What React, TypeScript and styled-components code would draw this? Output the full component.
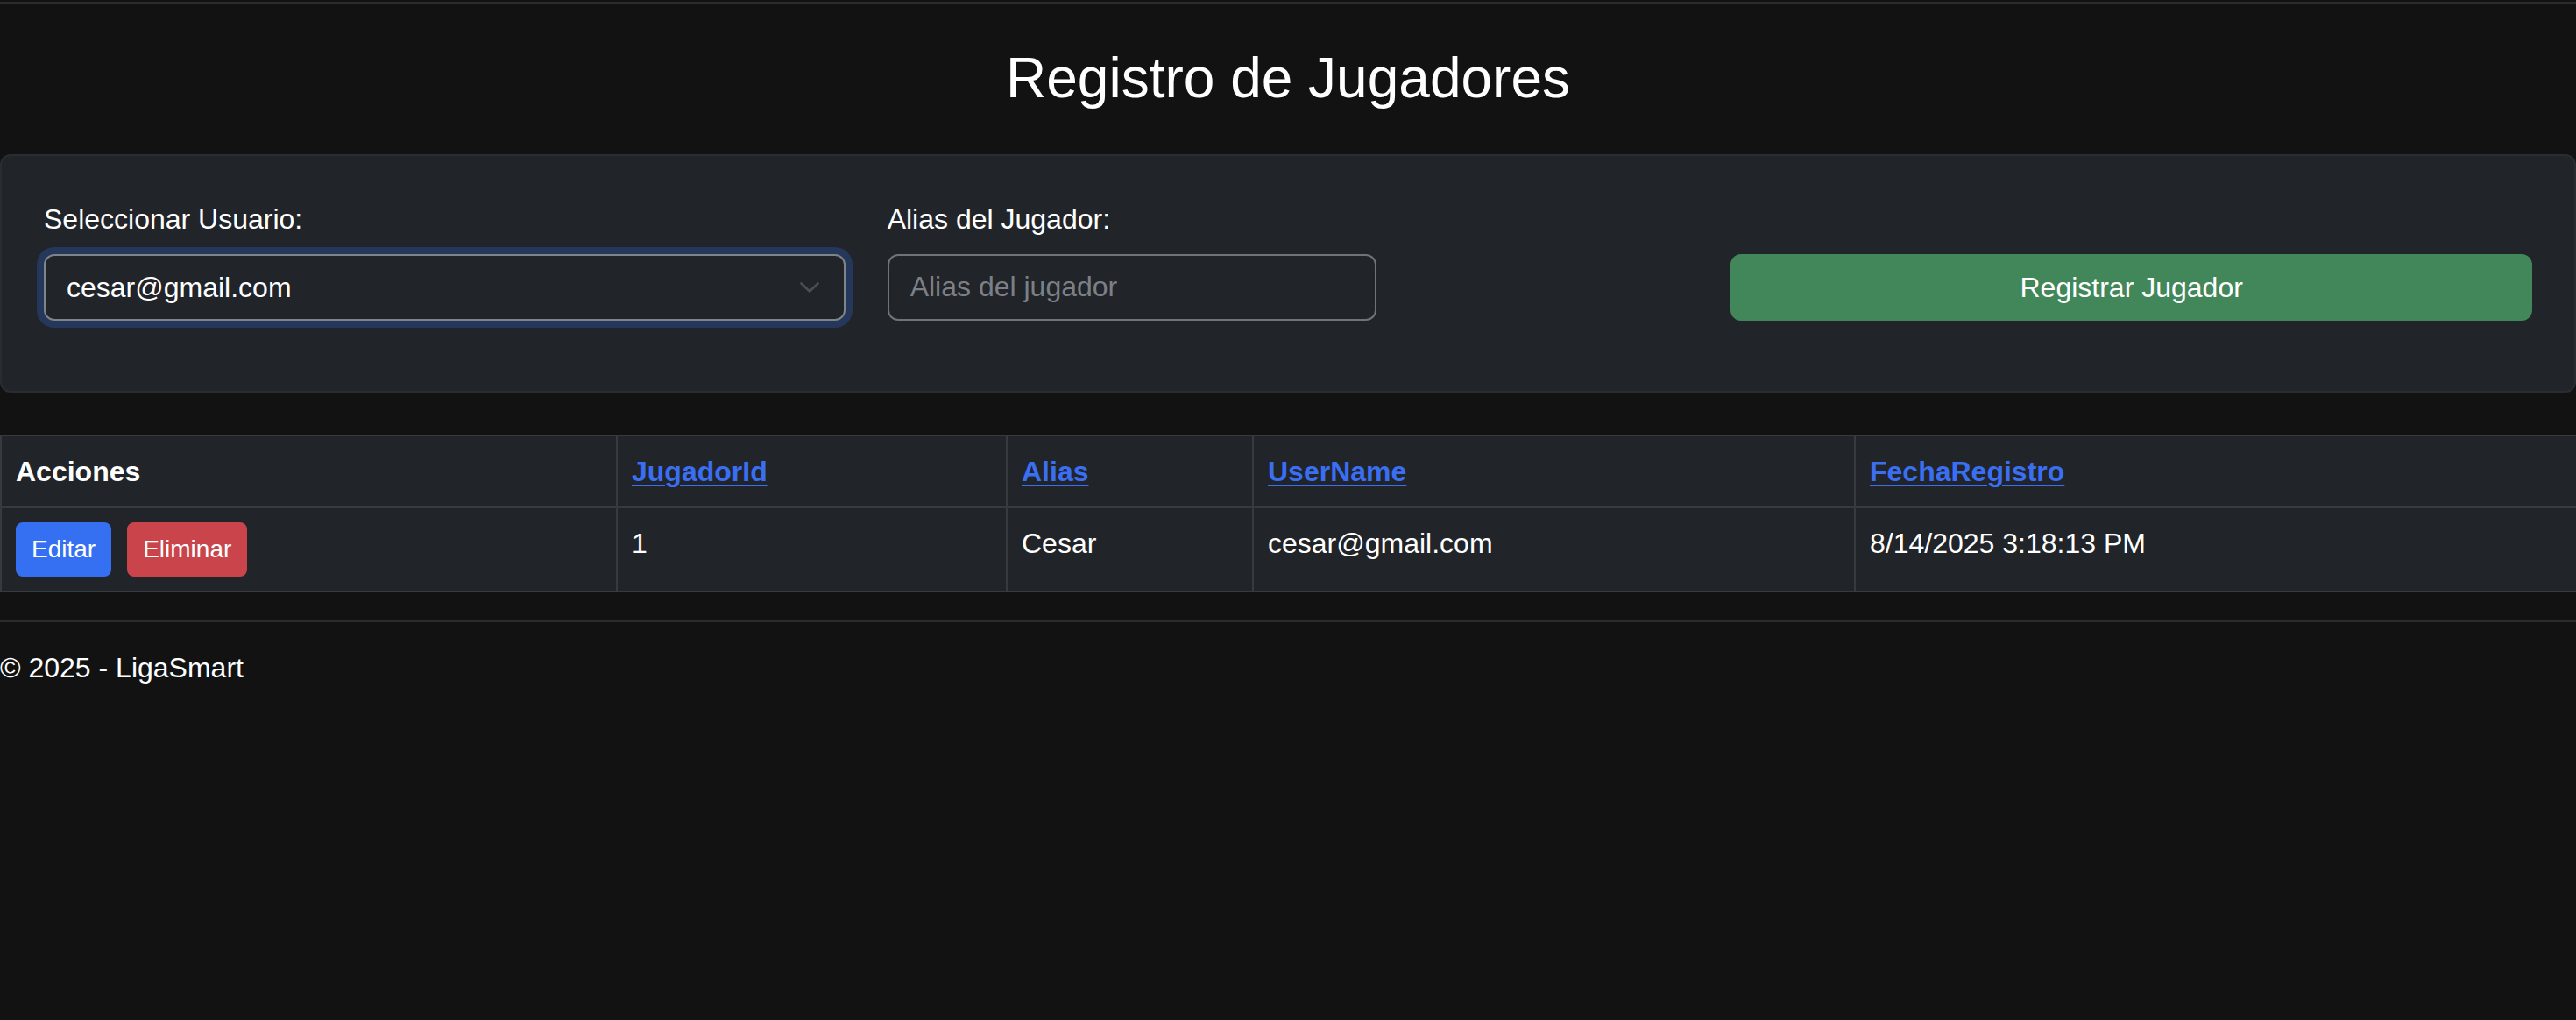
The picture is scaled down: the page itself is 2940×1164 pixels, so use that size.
import React from "react"
import styled, { createGlobalStyle } from "styled-components"

const GlobalStyle = createGlobalStyle`
  body {
    margin: 0;
    background-color: #121212;
    color: #ffffff;
    font-family: "Liberation Sans", Arial, Helvetica, sans-serif;
    font-size: 32px;
    line-height: 1.5;
  }
`

const players = [
  {
    id: 1,
    alias: "Cesar",
    userName: "cesar@gmail.com",
    fecha: "8/14/2025 3:18:13 PM",
  },
]

const Chevron = () => (
  <ChevronSvg width="22" height="12" viewBox="0 0 22 12" fill="none">
    <path
      d="M1.5 1.5 L11 10.5 L20.5 1.5"
      stroke="currentColor"
      strokeWidth="2.6"
      strokeLinecap="round"
      strokeLinejoin="round"
    />
  </ChevronSvg>
)

export default function App() {
  return (
    <>
      <GlobalStyle />
      <TopRule />
      <Main>
        <Title>Registro de Jugadores</Title>

        <FormCard>
          <FormRow>
            <Field>
              <Label>Seleccionar Usuario:</Label>
              <SelectWrap>
                <Select defaultValue="cesar@gmail.com">
                  <option>cesar@gmail.com</option>
                </Select>
                <Chevron />
              </SelectWrap>
            </Field>

            <Field>
              <Label>Alias del Jugador:</Label>
              <TextInput placeholder="Alias del jugador" />
            </Field>

            <Field>
              <SubmitButton>Registrar Jugador</SubmitButton>
            </Field>
          </FormRow>
        </FormCard>

        <Table>
          <colgroup>
            <Col $w={703} />
            <Col $w={445} />
            <Col $w={281} />
            <Col $w={687} />
            <Col $w={824} />
          </colgroup>
          <thead>
            <tr>
              <Th>Acciones</Th>
              <Th>
                <SortLink href="#">JugadorId</SortLink>
              </Th>
              <Th>
                <SortLink href="#">Alias</SortLink>
              </Th>
              <Th>
                <SortLink href="#">UserName</SortLink>
              </Th>
              <Th>
                <SortLink href="#">FechaRegistro</SortLink>
              </Th>
            </tr>
          </thead>
          <tbody>
            {players.map((p) => (
              <tr key={p.id}>
                <Td>
                  <Actions>
                    <SmallButton $variant="primary">Editar</SmallButton>
                    <SmallButton $variant="danger">Eliminar</SmallButton>
                  </Actions>
                </Td>
                <Td>{p.id}</Td>
                <Td>{p.alias}</Td>
                <Td>{p.userName}</Td>
                <Td>{p.fecha}</Td>
              </tr>
            ))}
          </tbody>
        </Table>
      </Main>

      <Footer>© 2025 - LigaSmart</Footer>
    </>
  )
}

const TopRule = styled.div`
  margin-top: 2px;
  height: 2px;
  background-color: #2c2c2c;
`

const Main = styled.main`
  display: flex;
  flex-direction: column;
`

const Title = styled.h2`
  margin: 47px 0 48px;
  font-size: 64px;
  font-weight: 400;
  line-height: 1.2;
  text-align: center;
  color: #ffffff;
`

const FormCard = styled.section`
  background-color: #212429;
  border: 2px solid #292d32;
  border-radius: 12px;
  padding: 48px;
  margin-bottom: 48px;
`

const FormRow = styled.div`
  display: grid;
  grid-template-columns: repeat(3, 1fr);
  column-gap: 48px;
  align-items: end;
`

const Field = styled.div`
  display: flex;
  flex-direction: column;
  margin-bottom: 32px;
`

const Label = styled.label`
  display: block;
  margin-bottom: 16px;
  font-size: 32px;
  line-height: 48px;
  color: #ffffff;
`

const SelectWrap = styled.div`
  position: relative;
  display: flex;
`

const Select = styled.select`
  appearance: none;
  width: 100%;
  height: 76px;
  padding: 12px 72px 12px 24px;
  font-family: inherit;
  font-size: 32px;
  line-height: 48px;
  color: #ffffff;
  background-color: #212429;
  border: 2px solid #7f8489;
  border-radius: 12px;
  box-shadow: 0 0 0 8px #25375a;
  outline: none;
`

const ChevronSvg = styled.svg`
  position: absolute;
  right: 30px;
  top: 32px;
  color: #4a4f55;
  pointer-events: none;
`

const TextInput = styled.input`
  box-sizing: border-box;
  width: 558px;
  height: 76px;
  padding: 12px 24px;
  font-family: inherit;
  font-size: 32px;
  line-height: 48px;
  color: #ffffff;
  background-color: #212429;
  border: 2px solid #6f7479;
  border-radius: 12px;
  outline: none;

  &::placeholder {
    color: #7b8086;
  }
`

const SubmitButton = styled.button`
  width: 100%;
  height: 76px;
  padding: 12px 24px;
  font-family: inherit;
  font-size: 32px;
  line-height: 48px;
  color: #ffffff;
  background-color: #42875a;
  border: 2px solid #42875a;
  border-radius: 12px;
  cursor: pointer;
`

const Table = styled.table`
  width: 100%;
  table-layout: fixed;
  border-collapse: collapse;
  margin-bottom: 32px;
  background-color: #212429;
  border: 2px solid #373b3f;
  vertical-align: top;
`

const Col = styled.col<{ $w: number }>`
  width: ${(p) => p.$w}px;
`

const Th = styled.th`
  padding: 16px;
  text-align: left;
  font-weight: 700;
  line-height: 48px;
  color: #ffffff;
  border: 2px solid #373b3f;
  vertical-align: top;
`

const Td = styled.td`
  padding: 16px;
  line-height: 48px;
  color: #ffffff;
  border: 2px solid #373b3f;
  vertical-align: top;
`

const SortLink = styled.a`
  color: #3a6ff2;
  text-decoration: underline;
  text-decoration-thickness: 2px;
  text-underline-offset: 4px;
`

const Actions = styled.div`
  display: flex;
  gap: 18px;
`

const SmallButton = styled.button<{ $variant: "primary" | "danger" }>`
  height: 62px;
  padding: 8px 16px;
  font-family: inherit;
  font-size: 28px;
  line-height: 42px;
  color: #ffffff;
  background-color: ${(p) => (p.$variant === "primary" ? "#3570f2" : "#ca454b")};
  border: 2px solid ${(p) => (p.$variant === "primary" ? "#3570f2" : "#ca454b")};
  border-radius: 8px;
  cursor: pointer;
`

const Footer = styled.footer`
  border-top: 2px solid #2c2c2c;
  padding-top: 28px;
  font-size: 32px;
  line-height: 48px;
  color: #ffffff;
`
